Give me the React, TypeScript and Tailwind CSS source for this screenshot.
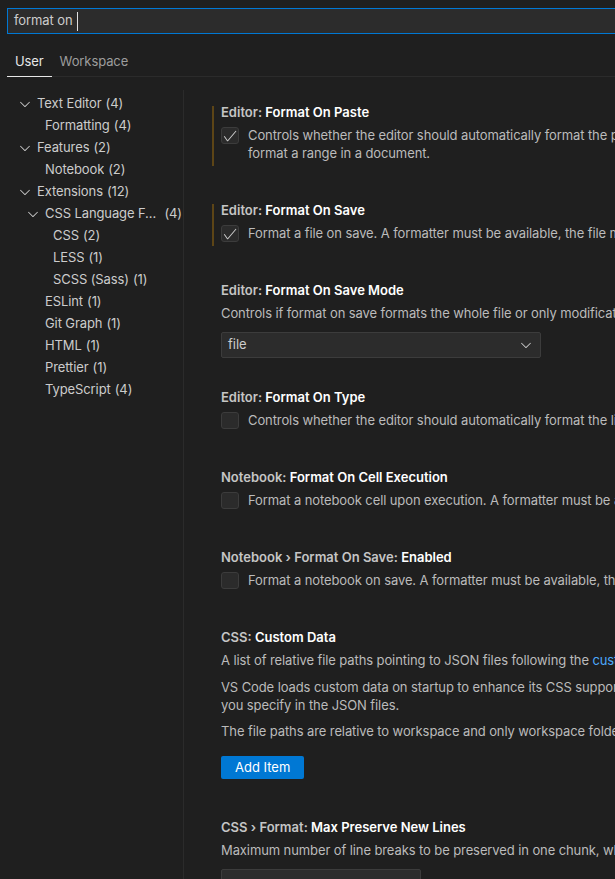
import React from "react";

const font = { fontFamily: "Inter, 'Noto Sans', sans-serif" };

type TreeNode = { label: string; count: number; level: number; open?: boolean };

const tree: TreeNode[] = [
  { label: "Text Editor", count: 4, level: 0, open: true },
  { label: "Formatting", count: 4, level: 1 },
  { label: "Features", count: 2, level: 0, open: true },
  { label: "Notebook", count: 2, level: 1 },
  { label: "Extensions", count: 12, level: 0, open: true },
  { label: "CSS Language Features", count: 4, level: 1, open: true },
  { label: "CSS", count: 2, level: 2 },
  { label: "LESS", count: 1, level: 2 },
  { label: "SCSS (Sass)", count: 1, level: 2 },
  { label: "ESLint", count: 1, level: 1 },
  { label: "Git Graph", count: 1, level: 1 },
  { label: "HTML", count: 1, level: 1 },
  { label: "Prettier", count: 1, level: 1 },
  { label: "TypeScript", count: 4, level: 1 },
];

const indent = ["pl-[17px]", "pl-[25px]", "pl-[33px]"];

function Chevron({ className = "" }: { className?: string }) {
  return (
    <svg width="16" height="16" viewBox="0 0 16 16" fill="currentColor" className={className}>
      <path d="M7.976 10.072l4.357-4.357.62.618L8.284 11h-.618L3 6.333l.619-.618 4.357 4.357z" />
    </svg>
  );
}

function Checkbox({ checked }: { checked?: boolean }) {
  return (
    <div className="mt-[1px] flex h-[17px] w-[18px] shrink-0 items-center justify-center rounded-[3px] border border-[#3c3c3c] bg-[#2b2b2b] text-[#cccccc]">
      {checked && (
        <svg width="16" height="16" viewBox="0 0 16 16" fill="currentColor">
          <path d="M14.431 3.323l-8.47 10-.79-.036-3.35-4.77.818-.574 2.978 4.24 8.051-9.506.764.646z" />
        </svg>
      )}
    </div>
  );
}

function Title({ cat, label }: { cat: string; label: string }) {
  return (
    <div className="h-[22px] whitespace-nowrap text-[13px] font-semibold leading-[22px]">
      <span className="text-[#c5c5c5]">{cat} </span>
      <span className="text-white">{label}</span>
    </div>
  );
}

function Setting({
  cat,
  label,
  modified,
  pb = "pb-[26px]",
  children,
}: {
  cat: string;
  label: string;
  modified?: boolean;
  pb?: string;
  children: React.ReactNode;
}) {
  return (
    <div className={`pt-[11px] ${pb}`}>
      <div className="relative">
        {modified && <div className="absolute left-[-9px] top-[5px] bottom-[-4px] w-[2px] bg-[#bb800966]" />}
        <Title cat={cat} label={label} />
        <div className="mt-[3px]">{children}</div>
      </div>
    </div>
  );
}

function CheckRow({ checked, children }: { checked?: boolean; children: React.ReactNode }) {
  return (
    <div className="flex items-start gap-[9px]">
      <Checkbox checked={checked} />
      <div className="whitespace-nowrap text-[13px] leading-[18px] tracking-[-0.1px] text-[#bbbbbb]">{children}</div>
    </div>
  );
}

export default function App() {
  return (
    <div className="h-[879px] w-[615px] overflow-hidden bg-[#1f1f1f]" style={font}>
      <div className="w-[1100px]">
        <div className="pl-[7px] pt-[8px]">
          <div className="flex h-[26px] items-center border border-[#0078d4] bg-[#2c2c2c] pl-[6px] text-[13px] tracking-[-0.1px] text-[#cccccc]">
            <span>format on</span>
            <span className="ml-[4px] h-[19px] w-px bg-[#e0e0e0]" />
          </div>
        </div>

        <div className="ml-[7px] mt-[14px] flex border-b border-[#2b2b2b] text-[13px] leading-[18px] tracking-[-0.1px]">
          <div className="-mb-px border-b border-[#e7e7e7] px-[8px] pb-[6px] pt-[4px] text-[#e7e7e7]">User</div>
          <div className="-mb-px px-[8px] pb-[6px] pt-[4px] text-[#9d9d9d]">Workspace</div>
        </div>

        <div className="mt-[13px] flex h-[800px]">
          <div className="w-[184px] shrink-0 border-r border-[#2b2b2b] pt-[3px]">
            {tree.map((n) => (
              <div
                key={n.label}
                className={`flex h-[22px] items-center pr-[1px] text-[13px] tracking-[-0.1px] text-[#cccccc] ${indent[n.level]}`}
              >
                <div className="flex h-[16px] w-[16px] shrink-0 items-center justify-center">
                  {n.open && <Chevron />}
                </div>
                <span className="ml-[4px] min-w-0 truncate">{n.label}</span>
                <span className="ml-[4px] shrink-0">({n.count})</span>
              </div>
            ))}
          </div>

          <div className="flex-1 pl-[37px]">
            <Setting cat="Editor:" label="Format On Paste" modified>
              <CheckRow checked>
                Controls whether the editor should automatically format the pasted content. A formatter must be available and the formatter should be able to
                <br />
                format a range in a document.
              </CheckRow>
            </Setting>

            <Setting cat="Editor:" label="Format On Save" modified>
              <CheckRow checked>
                Format a file on save. A formatter must be available, the file must not be saved after delay, and the editor must not be shutting down.
              </CheckRow>
            </Setting>

            <Setting cat="Editor:" label="Format On Save Mode" pb="pb-[17px]">
              <div className="whitespace-nowrap text-[13px] leading-[18px] tracking-[-0.1px] text-[#bbbbbb]">
                Controls if format on save formats the whole file or only modifications. Only applies when `#editor.formatOnSave#` is enabled.
              </div>
              <div className="mt-[10px] flex h-[26px] w-[320px] items-center justify-between rounded-[2px] border border-[#3c3c3c] bg-[#2c2c2c] pl-[6px] pr-[6px] text-[13px] text-[#cccccc]">
                <span>file</span>
                <Chevron />
              </div>
            </Setting>

            <Setting cat="Editor:" label="Format On Type">
              <CheckRow>
                Controls whether the editor should automatically format the line after typing.
              </CheckRow>
            </Setting>

            <Setting cat="Notebook:" label="Format On Cell Execution">
              <CheckRow>
                Format a notebook cell upon execution. A formatter must be available.
              </CheckRow>
            </Setting>

            <Setting cat="Notebook › Format On Save:" label="Enabled">
              <CheckRow>
                Format a notebook on save. A formatter must be available, the file must not be saved after delay, and the editor must not be shutting down.
              </CheckRow>
            </Setting>

            <Setting cat="CSS:" label="Custom Data">
              <div className="whitespace-nowrap text-[13px] leading-[18px] tracking-[-0.1px] text-[#bbbbbb]">
                <p>
                  A list of relative file paths pointing to JSON files following the{" "}
                  <span className="text-[#4daafc]">custom data format</span>.
                </p>
                <p className="mt-[9px]">
                  VS Code loads custom data on startup to enhance its CSS support for CSS custom properties (variables), at-rules, pseudo-classes, and pseudo-elements
                  <br />
                  you specify in the JSON files.
                </p>
                <p className="mt-[8px]">
                  The file paths are relative to workspace and only workspace folder settings are considered.
                </p>
              </div>
              <button className="mt-[16px] h-[23px] rounded-[2px] bg-[#0078d4] px-[14px] text-[13px] text-white">
                Add Item
              </button>
            </Setting>

            <Setting cat="CSS › Format:" label="Max Preserve New Lines">
              <div className="whitespace-nowrap text-[13px] leading-[18px] tracking-[-0.1px] text-[#bbbbbb]">
                Maximum number of line breaks to be preserved in one chunk, when `#css.format.preserveNewLines#` is enabled.
              </div>
              <div className="mt-[10px] h-[26px] w-[200px] rounded-[2px] border border-[#3c3c3c] bg-[#2c2c2c]" />
            </Setting>
          </div>
        </div>
      </div>
    </div>
  );
}
